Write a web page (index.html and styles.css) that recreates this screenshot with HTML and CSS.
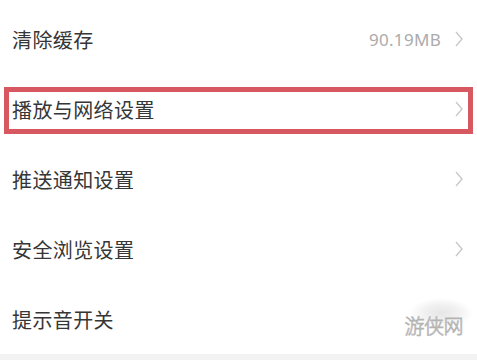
FILE: index.html
```html
<!DOCTYPE html>
<html lang="zh">
<head>
<meta charset="utf-8">
<link rel="stylesheet" href="styles.css">
</head>
<body>
<div class="list">
  <div class="row">
    <span class="label">清除缓存</span>
    <span class="right"><span class="value">90.19MB</span><svg class="chev" viewBox="0 0 8 16" width="8" height="16"><path d="M1 1 L7 8 L1 15" fill="none" stroke="#c9c9c9" stroke-width="1.4"/></svg></span>
  </div>
  <div class="row marked">
    <span class="label">播放与网络设置</span>
    <span class="right"><svg class="chev" viewBox="0 0 8 16" width="8" height="16"><path d="M1 1 L7 8 L1 15" fill="none" stroke="#c9c9c9" stroke-width="1.4"/></svg></span>
  </div>
  <div class="row">
    <span class="label">推送通知设置</span>
    <span class="right"><svg class="chev" viewBox="0 0 8 16" width="8" height="16"><path d="M1 1 L7 8 L1 15" fill="none" stroke="#c9c9c9" stroke-width="1.4"/></svg></span>
  </div>
  <div class="row">
    <span class="label">安全浏览设置</span>
    <span class="right"><svg class="chev" viewBox="0 0 8 16" width="8" height="16"><path d="M1 1 L7 8 L1 15" fill="none" stroke="#c9c9c9" stroke-width="1.4"/></svg></span>
  </div>
  <div class="row">
    <span class="label">提示音开关</span>
    <span class="watermark">游侠网</span>
  </div>
</div>
<div class="strip"></div>
</body>
</html>
```
FILE: styles.css
```css
html, body {
  margin: 0;
  padding: 0;
  background: #ffffff;
}
body {
  width: 477px;
  height: 360px;
  overflow: hidden;
  font-family: "Noto Sans CJK SC", "Noto Sans", sans-serif;
  display: flex;
  flex-direction: column;
}
.list {
  padding-top: 4px;
  flex: 1;
}
.row {
  position: relative;
  height: 70px;
  display: flex;
  align-items: center;
  justify-content: space-between;
  padding: 0 14px 0 12px;
}
.label {
  font-size: 20px;
  color: #363636;
  letter-spacing: 0.4px;
}
.right {
  display: flex;
  align-items: center;
  gap: 14px;
}
.value {
  font-family: "Noto Sans", sans-serif;
  font-size: 17px;
  color: #ababab;
  letter-spacing: 0.3px;
}
.chev {
  display: block;
}
.marked::after {
  content: "";
  position: absolute;
  left: 4px;
  top: 13px;
  width: 459px;
  height: 37px;
  border: 5px solid #d85862;
  pointer-events: none;
}
.watermark {
  position: absolute;
  z-index: 0;
  right: 14px;
  top: 30px;
  font-size: 20px;
  line-height: 24px;
  font-weight: 300;
  color: #ffffff;
  -webkit-text-stroke: 0.8px #b4b4b4;
  letter-spacing: -0.5px;
}
.watermark::before {
  content: "";
  position: absolute;
  left: 4px;
  top: -16px;
  width: 64px;
  height: 30px;
  border-radius: 50%;
  background: radial-gradient(closest-side, #e6e6e6 0%, #f1f1f1 55%, rgba(255,255,255,0) 100%);
  z-index: -1;
}
.strip {
  height: 6px;
  background: #f2f2f2;
}
```
